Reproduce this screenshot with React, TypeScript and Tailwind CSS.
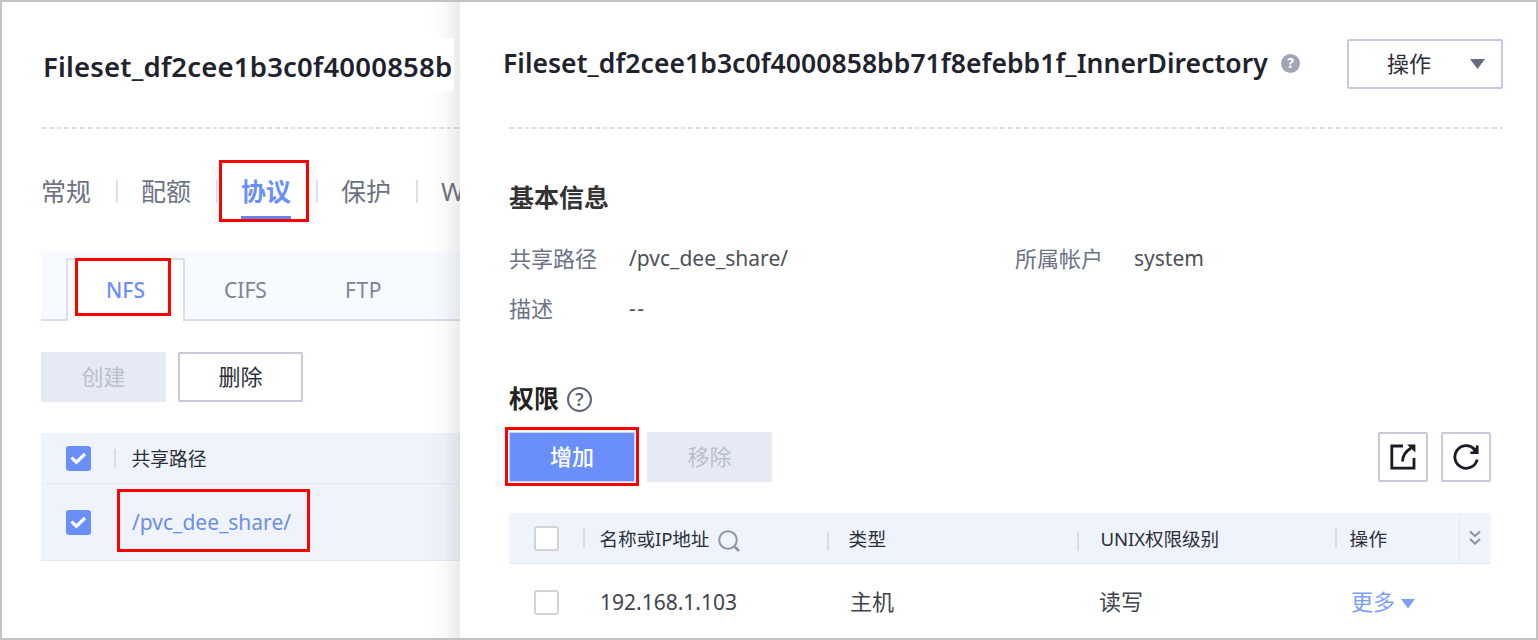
import React from 'react';

const DASH =
  'h-[2px] bg-[repeating-linear-gradient(90deg,#dcdfec_0px,#dcdfec_4.8px,transparent_4.8px,transparent_7.8px)]';

function Checked() {
  return (
    <span className="flex h-[25px] w-[25px] shrink-0 items-center justify-center rounded-[3px] bg-[#6a8ffa]">
      <svg width="17" height="13" viewBox="0 0 17 13" fill="none">
        <path d="M1.6 5.6L6.4 10.2L15 2" stroke="#fff" strokeWidth="3.2" />
      </svg>
    </span>
  );
}

function Unchecked() {
  return <span className="h-[25px] w-[25px] shrink-0 rounded-[3px] border-2 border-[#d3d3d6] bg-white" />;
}

function Highlight({ className }: { className: string }) {
  return <span className={`pointer-events-none absolute z-20 border-3 border-[#fe0000] ${className}`} />;
}

function TopTab({ label, active }: { label: string; active?: boolean }) {
  return (
    <div className="flex h-[54px] w-[100px] shrink-0 items-center">
      <span
        className={
          active
            ? 'relative w-[75px] text-[25px] leading-[52px] font-bold text-[#6a8ffa]'
            : 'w-[75px] text-[25px] leading-[54px] text-[#6c7284]'
        }
      >
        {label}
        {active && <span className="absolute -bottom-[3px] left-0 h-[4px] w-[50px] bg-[#5e86ee]" />}
      </span>
      <span className="h-[23px] w-[1.5px] bg-[#dbe0ef]" />
    </div>
  );
}

function LeftPane() {
  return (
    <section className="relative w-[458px] shrink-0 overflow-hidden bg-white pl-[39px]">
      <div className="relative z-10 mt-[36px] flex h-[53px] w-[413px] items-center bg-white pt-[5px] pl-[2px]">
        <h1 className="text-[27.5px] font-semibold tracking-[0.2px] whitespace-nowrap text-[#20232e]">Fileset_df2cee1b3c0f4000858b</h1>
      </div>
      <div className={`mt-[36px] ${DASH}`} />
      <nav className="mt-[35px] flex">
        <TopTab label="常规" />
        <TopTab label="配额" />
        <TopTab label="协议" active />
        <TopTab label="保护" />
        <span className="text-[25px] leading-[54px] text-[#6c7284]">W</span>
      </nav>

      <div className="mt-[34px] flex h-[69px] items-end bg-[#f7faff] text-[21px] text-[#7e8494]">
        <div className="h-full w-[25px] border-b-2 border-[#dadeec]" />
        <div className="flex h-[63px] w-[119px] items-center justify-center rounded-t-[2px] border-2 border-b-0 border-[#dadeec] bg-white font-medium text-[#6a8ffa]">
          NFS
        </div>
        <div className="flex h-full flex-1 items-center border-b-2 border-[#dadeec] pt-[10px]">
          <span className="w-[121px] pl-[39px]">CIFS</span>
          <span className="pl-[39px] tracking-[0.6px]">FTP</span>
        </div>
      </div>

      <div className="mt-[31px] flex gap-[13px] text-[22px]">
        <button className="h-[50px] w-[125px] bg-[#e6eaf5] pb-[2px] text-[#b9bfcd]">创建</button>
        <button className="-ml-[1px] h-[50px] w-[125px] rounded-[2px] border-2 border-[#c6cada] bg-white pb-[2px] text-[#2b2f3a]">删除</button>
      </div>

      <div className="mt-[31px] bg-[#eff3fb]">
        <div className="flex h-[51px] items-center border-b-[1.5px] border-[#e4e9f5] pl-[25px]">
          <Checked />
          <span className="ml-[23px] h-[19px] w-[1.5px] bg-[#d8dce9]" />
          <span className="ml-[16px] pt-[2px] text-[18.8px] text-[#2b2f3a]">共享路径</span>
        </div>
        <div className="flex h-[77px] items-center border-b-[1.5px] border-[#e4e9f5] pl-[25px]">
          <Checked />
          <a className="ml-[41px] pt-[2px] text-[21px] text-[#6d8ee5]">/pvc_dee_share/</a>
        </div>
      </div>

      <div className="pointer-events-none absolute inset-y-0 right-0 w-[32px] bg-linear-to-r from-transparent via-black/2 to-black/8" />
      <Highlight className="top-[158px] left-[217px] h-[62px] w-[90px]" />
      <Highlight className="top-[256px] left-[73px] h-[58px] w-[96px]" />
      <Highlight className="top-[487px] left-[115px] h-[63px] w-[193px]" />
    </section>
  );
}

function HeadCell({ label, width, low }: { label: React.ReactNode; width: string; low?: boolean }) {
  return (
    <div className={`flex shrink-0 items-center ${width}`}>
      <span className={low ? 'mt-[6px] h-[19px] w-[1.5px] bg-[#d8dce9]' : 'h-[19px] w-[1.5px] bg-[#d8dce9]'} />
      {label}
    </div>
  );
}

function RightPane() {
  return (
    <section className="flex-1 overflow-hidden bg-white pl-[49px]">
      <header className="mt-[37px] -ml-[6px] flex h-[50px] w-[1000px] items-center">
        <h2 className="w-[778px] text-[26.5px] font-semibold tracking-[0.06px] whitespace-nowrap text-[#20232e]">
          Fileset_df2cee1b3c0f4000858bb71f8efebb1f_InnerDirectory
        </h2>
        <span className="mb-[2px] flex h-[19px] w-[19px] items-center justify-center rounded-full bg-[#a0a6b8] text-[14px] leading-none font-bold text-white">
          ?
        </span>
        <button className="ml-auto flex h-[50px] w-[156px] items-center rounded-[2px] border-2 border-[#c6cada] pl-[38px] text-[22px] text-[#2b2f3a]">
          <span className="pb-[2px]">操作</span>
          <svg className="ml-[39px]" width="15" height="10" viewBox="0 0 15 10">
            <path d="M0 0H15L7.5 10Z" fill="#666c7f" />
          </svg>
        </button>
      </header>
      <div className={`mt-[38px] w-[994px] ${DASH}`} />

      <h3 className="mt-[48px] h-[40px] text-[25px] leading-[40px] font-bold text-[#333]">基本信息</h3>
      <div className="mt-[17px] flex h-[50px] items-center text-[22px] text-[#6c7284]">
        <span className="w-[120px] pb-[2px]">共享路径</span>
        <span className="w-[386px] text-[21px] text-[#4d5058]">/pvc_dee_share/</span>
        <span className="w-[119px] pb-[2px]">所属帐户</span>
        <span className="text-[21px] text-[#4d5058]">system</span>
      </div>
      <div className="flex h-[50px] items-center text-[22px] text-[#6c7284]">
        <span className="w-[120px] pb-[2px]">描述</span>
        <span className="text-[21px] tracking-[1.5px] text-[#4d5058]">--</span>
      </div>

      <div className="mt-[45px] flex h-[40px] items-center">
        <h3 className="w-[58px] pb-[2px] text-[25px] leading-[38px] font-bold text-[#222]">权限</h3>
        <span className="flex h-[25px] w-[25px] items-center justify-center rounded-full border-[2.5px] border-[#5d657a] text-[18px] leading-none font-semibold text-[#5d657a]">
          ?
        </span>
      </div>
      <div className="mt-[13px] flex h-[50px] w-[982px] text-[22px]">
        <div className="relative">
          <button className="h-[50px] w-[126px] border border-[#c9d6fd] bg-[#6a8ffa] pb-[2px] font-medium text-white">增加</button>
          <Highlight className="-top-[5px] -left-[4px] h-[59px] w-[134px]" />
        </div>
        <button className="ml-[12px] h-[50px] w-[125px] bg-[#e6eaf5] pb-[2px] text-[#b9bfcd]">移除</button>
        <button className="ml-auto flex h-[50px] w-[50px] items-center justify-center rounded-[2px] border-2 border-[#c6cada]">
          <svg width="26" height="26" viewBox="0 0 26 26" fill="none" stroke="#191c26">
            <path d="M13 2H1.8V24.2H24V14" strokeWidth="2.8" />
            <path d="M12.5 17.5C12.5 11.5 15.5 7.5 21 4" strokeWidth="2.8" />
            <path d="M17 .6H25.4V8.6Z" fill="#191c26" stroke="none" />
          </svg>
        </button>
        <button className="ml-[13px] flex h-[50px] w-[50px] items-center justify-center rounded-[2px] border-2 border-[#c6cada]">
          <svg width="26" height="26" viewBox="0 0 26 26" fill="none" stroke="#191c26">
            <path d="M24.2 15.5A11.3 11.3 0 1 1 21.4 5.2" strokeWidth="2.8" />
            <path d="M25.6 1.6V10H17.4V7.4H20.2L19.6 4.8L22.8 4V1.6Z" fill="#191c26" stroke="none" />
          </svg>
        </button>
      </div>

      <div className="mt-[31px] w-[982px]">
        <div className="flex h-[51px] border-b-[1.5px] border-[#e2e7f4] bg-[#eff3fb] text-[18.6px] text-[#2b2f3a]">
          <div className="flex w-[74px] items-center pl-[25px]">
            <Unchecked />
          </div>
          <HeadCell
            width="w-[244px]"
            label={
              <>
                <span className="ml-[15px] w-[118px] pt-[1px] tracking-[-0.1px] whitespace-nowrap">名称或IP地址</span>
                <svg className="mt-[5px]" width="22" height="22" viewBox="0 0 22 22" fill="none" stroke="#8e95aa" strokeWidth="2">
                  <circle cx="10" cy="10" r="8.8" />
                  <path d="M16 16L21 21" strokeWidth="2.6" />
                </svg>
              </>
            }
          />
          <HeadCell width="w-[250px]" low label={<span className="ml-[20px] pt-[1px] tracking-[0.5px]">类型</span>} />
          <HeadCell width="w-[258px]" low label={<span className="ml-[22px] pt-[1px] tracking-[-0.1px]">UNIX权限级别</span>} />
          <HeadCell width="w-[124px]" label={<span className="ml-[13px] pt-[1px] tracking-[0.3px]">操作</span>} />
          <div className="flex flex-1 items-center justify-center border-l-[1.5px] border-[#e2e7f4] pr-[2px]">
            <svg width="12" height="16" viewBox="0 0 12 16" fill="none" stroke="#8e95aa" strokeWidth="2.2">
              <path d="M1 1.5L6 6L11 1.5M1 9L6 13.5L11 9" />
            </svg>
          </div>
        </div>
        <div className="flex h-[76px] items-center text-[22px] text-[#3f434d]">
          <div className="flex w-[91px] items-center pl-[25px]">
            <Unchecked />
          </div>
          <span className="w-[250px] pt-[2px] text-[21px]">192.168.1.103</span>
          <span className="w-[249px] pb-[2px]">主机</span>
          <span className="w-[252px] pb-[2px]">读写</span>
          <a className="flex items-center text-[#7d9dfb]">
            <span className="pb-[2px]">更多</span>
            <svg className="mt-[3px] ml-[6px]" width="14" height="10" viewBox="0 0 14 10">
              <path d="M0 0H14L7 9.5Z" fill="#7d9dfb" />
            </svg>
          </a>
        </div>
      </div>
    </section>
  );
}

export default function App() {
  return (
    <div className="flex h-[640px] w-[1538px] overflow-hidden border-2 border-[#c2c2c2] bg-white font-['Noto_Sans','Noto_Sans_CJK_SC',sans-serif]">
      <LeftPane />
      <RightPane />
    </div>
  );
}
